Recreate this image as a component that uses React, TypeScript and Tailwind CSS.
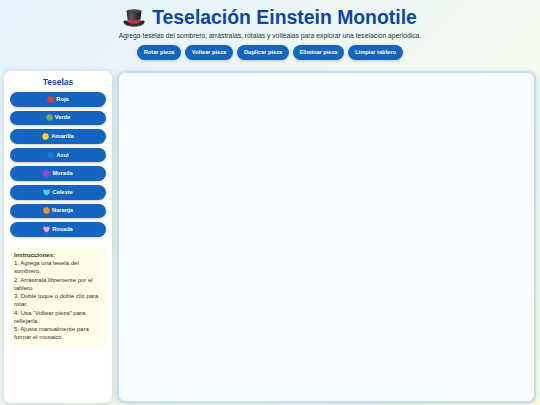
interface Piece {
  name: string;
  color: string;
  shape: "circle" | "heart";
}

const pieces: Piece[] = [
  { name: "Roja", color: "#e53935", shape: "circle" },
  { name: "Verde", color: "#69b04a", shape: "circle" },
  { name: "Amarilla", color: "#fcd230", shape: "circle" },
  { name: "Azul", color: "#1976d2", shape: "circle" },
  { name: "Morada", color: "#a93fc4", shape: "circle" },
  { name: "Celeste", color: "#5ccbf5", shape: "heart" },
  { name: "Naranja", color: "#f79421", shape: "circle" },
  { name: "Rosada", color: "#f5a3d3", shape: "heart" },
];

const actions = [
  { label: "Rotar pieza", width: "w-[44px]" },
  { label: "Voltear pieza", width: "w-[48px]" },
  { label: "Duplicar pieza", width: "w-[52px]" },
  { label: "Eliminar pieza", width: "w-[51px]" },
  { label: "Limpiar tablero", width: "w-[55px]" },
];

const instructions = [
  ["1. Agrega una tesela del", "sombrero."],
  ["2. Arrástrala libremente por el", "tablero."],
  ["3. Doble toque o doble clic para", "rotar."],
  ["4. Usa “Voltear pieza” para", "reflejarla."],
  ["5. Ajusta manualmente para", "formar el mosaico."],
];

function TopHat() {
  return (
    <svg viewBox="0 0 44 36" className="w-[22px] h-[18px] shrink-0">
      <defs>
        <linearGradient id="felt" x1="0" x2="1" y1="0" y2="0">
          <stop offset="0" stopColor="#252525" />
          <stop offset="0.3" stopColor="#5a5959" />
          <stop offset="0.65" stopColor="#343333" />
          <stop offset="1" stopColor="#171717" />
        </linearGradient>
      </defs>
      <path
        d="M1 27 Q0 23 4 23 L10 24 L34 24 L40 23 Q44 23 43 27 Q40 35 22 35 Q4 35 1 27Z"
        fill="#292829"
      />
      <path d="M7 4 L37 4 L34 27 Q22 32 10 27Z" fill="url(#felt)" />
      <path d="M9.5 20 Q22 25 34.5 20 L34 27 Q22 32 10 27Z" fill="#c52e45" />
      <ellipse cx="22" cy="4" rx="15" ry="3.5" fill="#48474a" />
      <path d="M4 29 Q22 37 40 29 Q36 35 22 35 Q8 35 4 29Z" fill="#494448" />
    </svg>
  );
}

function PieceIcon({ color, shape }: { color: string; shape: Piece["shape"] }) {
  return (
    <svg viewBox="0 0 14 14" className="w-[7px] h-[7px] shrink-0">
      {shape === "circle" ? (
        <circle cx="7" cy="7" r="6.4" fill={color} />
      ) : (
        <path
          d="M7 13 C4 11 .5 8 .5 4.5 C.5 .5 5.5 .2 7 3.2 C8.5 .2 13.5 .5 13.5 4.5 C13.5 8 10 11 7 13Z"
          fill={color}
        />
      )}
    </svg>
  );
}

export default function App() {
  return (
    <div className="w-[540px] h-[405px] overflow-hidden flex flex-col bg-[linear-gradient(135deg,#e3f2fd,#f1f8f2_50%,#fffde7)] font-['Liberation_Sans',Arial,sans-serif] text-[#263238]">
      <header className="h-[71px] shrink-0 flex flex-col items-center pt-[5px]">
        <h1 className="h-[25px] flex items-center gap-[7px] text-[19.4px] leading-[24px] font-bold text-[#0d47a1] whitespace-nowrap">
          <TopHat />
          <span className="pb-[2px]">Teselación Einstein Monotile</span>
        </h1>
        <p className="mt-px text-[6.78px] leading-[10px] whitespace-nowrap">
          Agrega teselas del sombrero, arrástralas, rótalas y voltéalas para
          explorar una teselación aperiódica.
        </p>
        <div className="mt-[3.5px] flex gap-1">
          {actions.map((action) => (
            <button
              key={action.label}
              className={`${action.width} h-[15px] rounded-full bg-[#1565c0] text-white text-[5.65px] leading-[15px] font-bold whitespace-nowrap shadow-[0_1px_3px_rgba(0,0,0,0.2)]`}
            >
              {action.label}
            </button>
          ))}
        </div>
      </header>

      <main className="h-[331.5px] flex gap-[5px] px-1">
        <aside className="w-[108px] shrink-0 rounded-[7px] bg-white px-[6px] pt-[5px] shadow-[0_1px_6px_rgba(0,0,0,0.15)]">
          <h2 className="h-[12px] text-center text-[8.5px] leading-[12px] font-bold text-[#0d47a1]">
            Teselas
          </h2>
          <div className="mt-[4px] flex flex-col gap-[4px]">
            {pieces.map((piece) => (
              <button
                key={piece.name}
                className="h-[14.6px] w-full flex items-center justify-center gap-[2px] rounded-full bg-[#1565c0] text-white text-[5.7px] leading-[15px] font-bold shadow-[0_1px_3px_rgba(0,0,0,0.2)]"
              >
                <PieceIcon color={piece.color} shape={piece.shape} />
                {piece.name}
              </button>
            ))}
          </div>
          <div className="mt-[10px] h-[100px] rounded-[5px] bg-[#fffde7] px-1 pt-[4px] text-[6px] leading-[8.26px] text-[#333333] whitespace-nowrap">
            <strong>Instrucciones:</strong>
            {instructions.map(([first, second]) => (
              <p key={first}>
                {first}
                <br />
                {second}
              </p>
            ))}
          </div>
        </aside>
        <section className="flex-1 rounded-[8px] border-2 border-[#c4def2] bg-[#f7fcff] shadow-[0_1px_6px_rgba(0,0,0,0.15)]" />
      </main>
    </div>
  );
}
